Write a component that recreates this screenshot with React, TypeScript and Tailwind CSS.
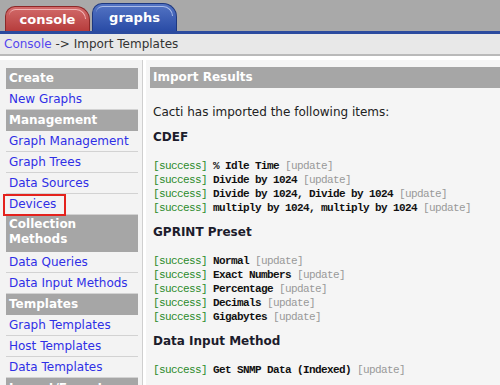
import React from "react";

type Section = { title: React.ReactNode; tall?: boolean; items: string[] };

const sections: Section[] = [
  { title: "Create", items: ["New Graphs"] },
  { title: "Management", items: ["Graph Management", "Graph Trees", "Data Sources", "Devices"] },
  {
    title: (
      <>
        Collection
        <br />
        Methods
      </>
    ),
    tall: true,
    items: ["Data Queries", "Data Input Methods"],
  },
  { title: "Templates", items: ["Graph Templates", "Host Templates", "Data Templates"] },
  { title: "Import/Export", items: [] },
];

type Row = { name: string };

const cdef: Row[] = [
  { name: "% Idle Time" },
  { name: "Divide by 1024" },
  { name: "Divide by 1024, Divide by 1024" },
  { name: "multiply by 1024, multiply by 1024" },
];

const gprint: Row[] = [
  { name: "Normal" },
  { name: "Exact Numbers" },
  { name: "Percentage" },
  { name: "Decimals" },
  { name: "Gigabytes" },
];

const inputs: Row[] = [{ name: "Get SNMP Data (Indexed)" }];

const ResultList = ({ rows }: { rows: Row[] }) => (
  <div className="mt-[15px] [font-family:'Liberation_Mono','Courier_New',monospace] text-[11px] leading-[14px] [letter-spacing:-0.6px] whitespace-pre">
    {rows.map((r) => (
      <div key={r.name}>
        <span className="text-[#2a8a2a]">[success]</span>{" "}
        <span className="text-[#111] font-bold">{r.name}</span>{" "}
        <span className="text-[#999]">[update]</span>
      </div>
    ))}
  </div>
);

const Tab = ({ label, red }: { label: string; red?: boolean }) => (
  <div
    className={
      red
        ? "relative w-[85px] h-[25px] rounded-tl-[10px] rounded-tr-[14px] border border-b-0 border-[#8c2828] bg-linear-to-b from-[#d26a6a] to-[#b63c3c] flex items-center justify-center"
        : "relative w-[85px] h-[28px] rounded-tl-[10px] rounded-tr-[14px] border border-b-0 border-[#1d3880] bg-linear-to-b from-[#5474c4] to-[#2a4ca6] flex items-center justify-center"
    }
  >
    <div
      className={
        red
          ? "absolute left-[3px] right-[3px] top-[2px] h-[10px] rounded-tl-[8px] rounded-tr-[12px] border-t border-r border-[#f2b4b4]"
          : "absolute left-[3px] right-[3px] top-[2px] h-[10px] rounded-tl-[8px] rounded-tr-[12px] border-t border-r border-[#a9bce8]"
      }
    />
    <span className="relative pt-[1px] text-white font-bold text-[13px]">{label}</span>
  </div>
);

export default function App() {
  return (
    <div className="w-[500px] h-[385px] overflow-hidden bg-white [font-family:'DejaVu_Sans',Verdana,sans-serif] text-[12px]">
      <div className="h-[31px] bg-[#a9a9a9] flex items-end gap-[2px] pl-[5px]">
        <Tab label="console" red />
        <Tab label="graphs" />
      </div>
      <div className="h-[3px] bg-[#2b4b9f]" />
      <div className="h-[22px] bg-[#e8e8e8] border-b-2 border-[#b9b9b9] px-[4px] leading-[20px] text-[#333]">
        <span className="text-[#5446ee]">Console</span> -&gt; Import Templates
      </div>
      <div className="h-[4px]" />
      <div className="flex">
        <div className="w-[143px] shrink-0 bg-[#f3f3f3] border-r border-[#cfcfcf] pt-[8px] pl-[6px] pr-[4px] h-[330px]">
          {sections.map((s, i) => (
            <div key={i}>
              <div
                className={
                  s.tall
                    ? "bg-[#a6a6a6] text-white font-bold pl-[3px] pt-[2px] pb-[5px] leading-[15px]"
                    : "bg-[#a6a6a6] text-white font-bold pl-[3px] h-[21px] leading-[21px]"
                }
              >
                {s.title}
              </div>
              {s.items.map((it) => (
                <div
                  key={it}
                  className="relative h-[21px] border-b border-[#d2d2d2] pl-[3px] leading-[20px] text-[#2f2fe6]"
                >
                  {it}
                  {it === "Devices" && (
                    <div className="absolute left-[-3px] top-0 w-[63px] h-[22px] border-2 border-[#e4221d]" />
                  )}
                </div>
              ))}
            </div>
          ))}
        </div>
        <div className="w-[3px] shrink-0" />
        <div className="flex-1 bg-[#f5f5f5] pt-[7px] pl-[4px] h-[330px]">
          <div className="h-[21px] bg-[#a6a6a6] text-white font-bold pl-[3px] leading-[21px]">Import Results</div>
          <div className="pl-[3px]">
            <p className="mt-[17px] leading-[14px] text-[#222]">Cacti has imported the following items:</p>
            <h3 className="mt-[11px] leading-[14px] font-bold text-[#1c1c2c]">CDEF</h3>
            <ResultList rows={cdef} />
            <h3 className="mt-[10px] leading-[14px] font-bold text-[#1c1c2c]">GPRINT Preset</h3>
            <ResultList rows={gprint} />
            <h3 className="mt-[10px] leading-[14px] font-bold text-[#1c1c2c]">Data Input Method</h3>
            <ResultList rows={inputs} />
          </div>
        </div>
      </div>
    </div>
  );
}
